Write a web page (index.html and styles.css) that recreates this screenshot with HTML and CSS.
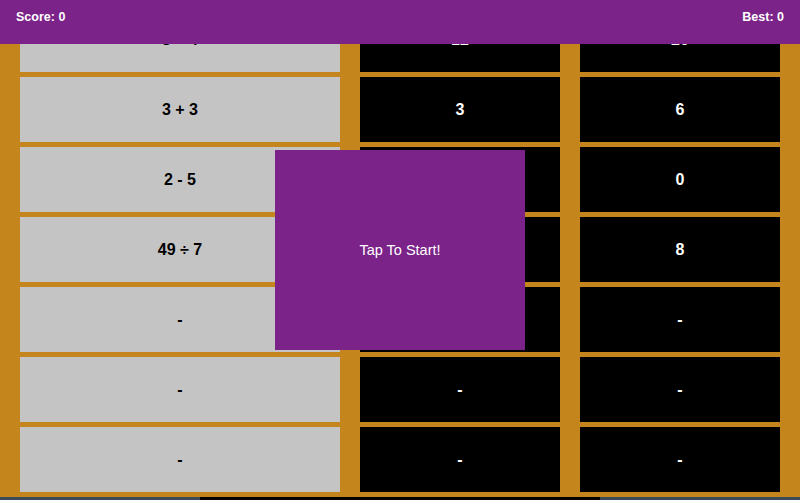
FILE: index.html
```html
<!DOCTYPE html>
<html>
<head>
<meta charset="utf-8">
<link rel="stylesheet" href="styles.css">
</head>
<body>
<header class="topbar">
  <span class="stat">Score: 0</span>
  <span class="stat">Best: 0</span>
</header>
<main class="board">
  <div class="cell q">8 + 4</div><div class="cell a">12</div><div class="cell a">20</div>
  <div class="cell q">3 + 3</div><div class="cell a">3</div><div class="cell a">6</div>
  <div class="cell q">2 - 5</div><div class="cell a">-3</div><div class="cell a">0</div>
  <div class="cell q">49 ÷ 7</div><div class="cell a">7</div><div class="cell a">8</div>
  <div class="cell q">-</div><div class="cell a">-</div><div class="cell a">-</div>
  <div class="cell q">-</div><div class="cell a">-</div><div class="cell a">-</div>
  <div class="cell q">-</div><div class="cell a">-</div><div class="cell a">-</div>
</main>
<div class="strip"><span class="seg side"></span><span class="seg mid"></span><span class="seg side"></span></div>
<div class="overlay">Tap To Start!</div>
</body>
</html>
```
FILE: styles.css
```css
html, body {
  margin: 0;
  padding: 0;
  width: 800px;
  height: 500px;
  overflow: hidden;
  background: #c4861c;
  font-family: "Liberation Sans", Arial, sans-serif;
}
.topbar {
  position: fixed;
  top: 0;
  left: 0;
  right: 0;
  height: 44px;
  background: #7b2389;
  color: #fff;
  display: flex;
  justify-content: space-between;
  align-items: flex-start;
  padding: 10px 16px 0;
  box-sizing: border-box;
  z-index: 2;
}
.stat {
  font-size: 12.5px;
  font-weight: bold;
  line-height: 14px;
}
.board {
  display: grid;
  grid-template-columns: 320px 200px 200px;
  grid-auto-rows: 65px;
  column-gap: 20px;
  row-gap: 5px;
  padding: 7px 20px 5px;
}
.cell {
  display: flex;
  align-items: center;
  justify-content: center;
  font-size: 16px;
  font-weight: bold;
}
.q {
  background: #c4c4c4;
  color: #000;
}
.a {
  background: #000;
  color: #fff;
}
.strip {
  display: flex;
  height: 3px;
}
.seg.side {
  width: 200px;
  background: #3d4b59;
}
.seg.mid {
  width: 400px;
  background: #000;
}
.overlay {
  position: fixed;
  left: 275px;
  top: 150px;
  width: 250px;
  height: 200px;
  background: #7b2389;
  color: #fff;
  font-size: 14.5px;
  display: flex;
  align-items: center;
  justify-content: center;
  z-index: 3;
}
```
